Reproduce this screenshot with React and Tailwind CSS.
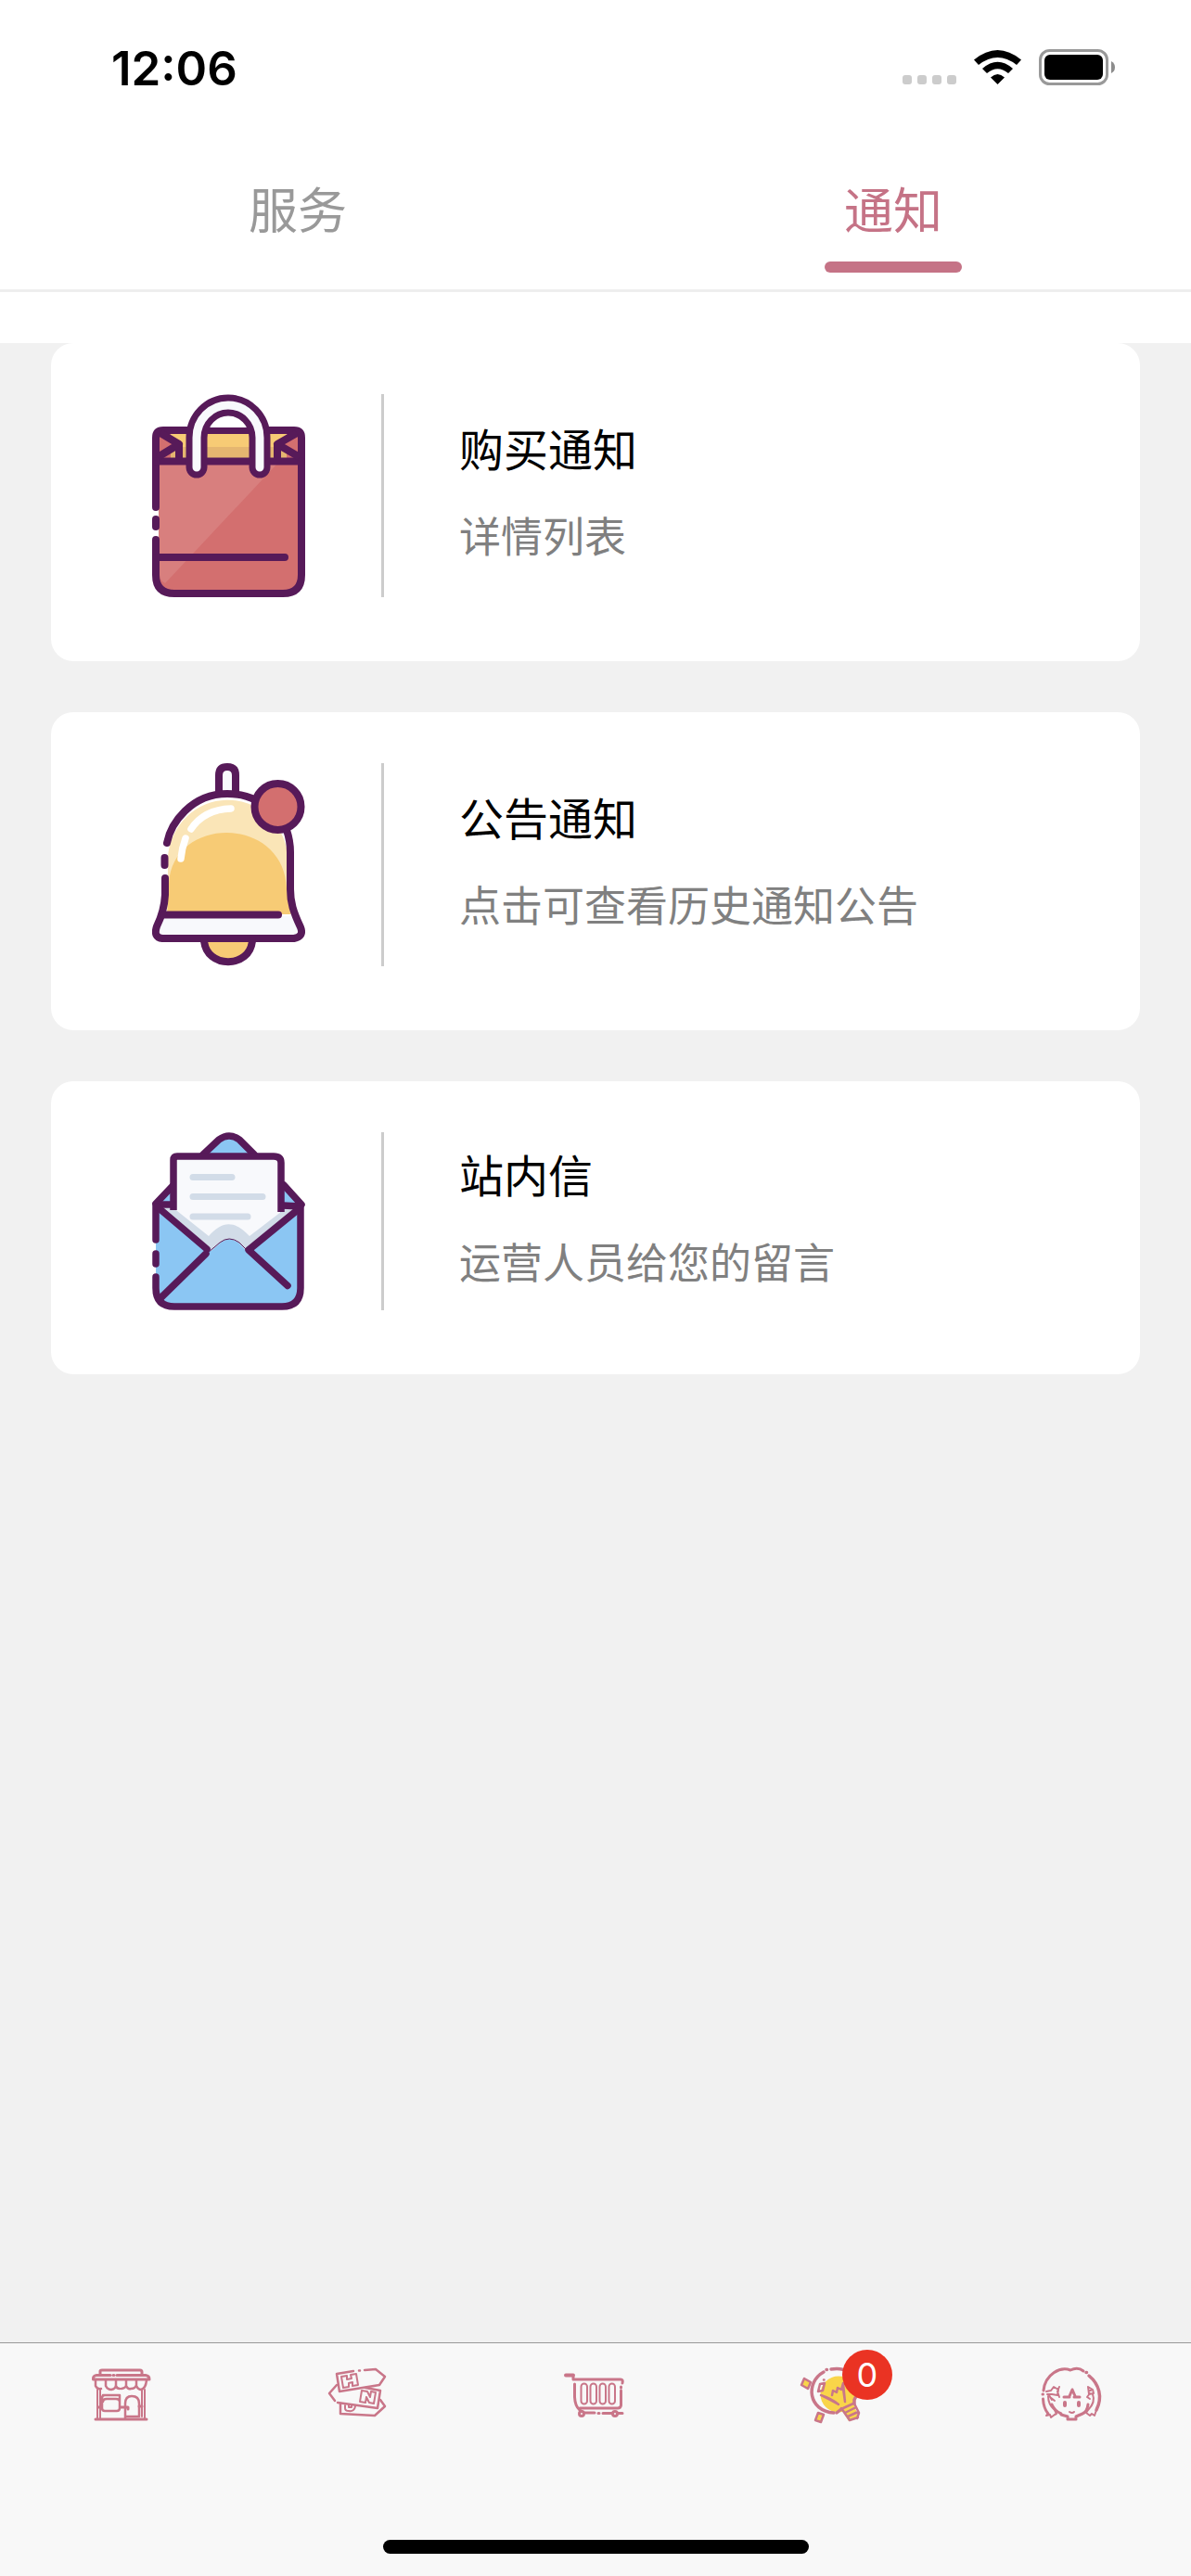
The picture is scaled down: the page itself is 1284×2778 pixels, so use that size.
const PLUM = '#571a59';

function BagIcon() {
  return (
    <svg viewBox="0 0 165 219" className="h-[219px] w-[165px]" aria-hidden="true">
      <rect x="4" y="38" width="157" height="178" rx="16" fill="#d36f6f" />
      <path d="M7 76H134L14 204Q7 200 7 192Z" fill="#d87f7e" />
      <rect x="20" y="42" width="125" height="30" fill="#f7cb75" />
      <path d="M20 57H145V72H20Z" fill="#e5b670" />
      <path d="M7 42L27 54L7 66ZM158 42L139 54L158 66Z" fill="#d36f6f" />
      <path d="M0 124H7V133H0ZM0 146H7V156H0Z" fill="#fff" />
      <g fill="none" stroke={PLUM} strokeWidth="8" strokeLinecap="round" strokeLinejoin="round">
        <path d="M4 122V47Q4 39 12 39H153Q161 39 161 47V195Q161 215 141 215H24Q4 215 4 195V157" />
        <path d="M4 135V143" />
        <path d="M4 72.500H161M4 176H143" />
        <path d="M9 42L29 54L6 68M29 54V70M156 42L135 54L159 68M135 54V70" strokeLinecap="butt" />
      </g>
      <path d="M62 36C67 21 98 21 103 36Z" fill="#fff" />
      <path d="M48 79V47A34 35 0 0 1 116 47V79" fill="none" stroke={PLUM} strokeWidth="23" strokeLinecap="round" />
      <path d="M48 79V47A34 35 0 0 1 116 47V79" fill="none" stroke="#f8f9fc" strokeWidth="9" strokeLinecap="round" />
    </svg>
  );
}

function BellIcon() {
  return (
    <svg viewBox="0 0 165 219" className="h-[219px] w-[165px]" aria-hidden="true">
      <path d="M17 162V100A65 67 0 0 1 146 97V130L150 163Z" fill="#fae5b7" />
      <path d="M16 162L18 130C22 56 142 56 145 135L149 163Z" fill="#f7cb75" />
      <path d="M12 165H150L159 181Q160 187 153 188H11Q5 187 7 181Z" fill="#f8f9fc" />
      <path d="M56 190C58 222 106 222 108 190Z" fill="#f7cb75" />
      <path d="M72 31V13Q72 4 81 4Q90 4 90 13V31Z" fill="#f8f9fc" />
      <g fill="none" stroke={PLUM} strokeWidth="8" strokeLinecap="round" strokeLinejoin="round">
        <path d="M72 31V13Q72 4 81 4Q90 4 90 13V31" />
        <path d="M16 86C20 65 42 33 81 33Q99 33 112 40" />
        <path d="M13.500 102V110" />
        <path d="M14 124V142Q13 160 5 176Q1 188 11 189H153Q164 187 160 177C152 160 149 150 149 136V96Q149 84 145 72" />
        <path d="M13 163.500H136" />
        <path d="M56 191C58 222 106 222 108 191" />
      </g>
      <circle cx="135.500" cy="47" r="25" fill="#d36f6f" stroke={PLUM} strokeWidth="8" />
      <path d="M85 49Q56 50 42 71M36 81Q32 92 31 103" fill="none" stroke="#fff" strokeWidth="7.500" strokeLinecap="round" />
    </svg>
  );
}

function MailIcon() {
  return (
    <svg viewBox="0 0 165 192" className="h-[192px] w-[165px]" aria-hidden="true">
      <path d="M4 78L68 11Q82 -3 97 11L160 78V170Q160 188 143 188H21Q4 188 4 172Z" fill="#8bc6f3" />
      <path d="M24 26H138V90L105 125H60L24 90Z" fill="#f8f9fc" />
      <path d="M9 79L17 77L61 112C76 95 89 95 105 112L148 79L156 81L103 128H62Z" fill="#d2dce8" />
      <path d="M58 133L73 120Q83 111 94 120L106 133Z" fill="#8bc6f3" />
      <path d="M0 121H4V127H0ZM0 146H4V152H0Z" fill="#fff" />
      <g fill="none" stroke={PLUM} strokeWidth="7.500" strokeLinecap="round" strokeLinejoin="round">
        <path d="M55 24L72 8Q83 0 94 8L110 24" />
        <path d="M22 58L4 77M142 57L161 78" />
        <path d="M23 84V30Q23 26 27 26H131Q139 26 139 33V86" strokeLinecap="butt" />
        <path d="M4 116V78H22M141 79L160 80V168Q160 188 140 188H24Q4 188 4 168V156" />
        <path d="M4 131V142" />
        <path d="M5 80L59 126M8 180L58 131M159 82L104 127L146 165.500" />
      </g>
      <path d="M60 130L73 119Q83 111 94 119L103 128" fill="none" stroke={PLUM} strokeWidth="1" />
      <path d="M44 48.500H86M44 69.500H119M44 91H103" fill="none" stroke="#d2dce8" strokeWidth="7" strokeLinecap="round" />
    </svg>
  );
}

function ShopIcon() {
  return (
    <svg viewBox="-3 -1 64 64" className="size-16 overflow-visible" fill="none" stroke="#c97689" strokeWidth="3" strokeLinecap="round" strokeLinejoin="round" aria-hidden="true">
      <path d="M9 9V5Q9 4 11 4H52Q54 4 54 6V9" />
      <path d="M20 9.500H5Q1 10 1.500 14H62Q62 10 58 9.500H27M23 9.500H24" />
      <path d="M4 14V21Q6 25 10 24M15 15V21Q17 25 21 25Q26 24 26 20V15M37 15V21Q39 25 42 24M32 24Q37 23 37 20M48 15V21Q50 25 53 25Q58 24 59 15M26 21Q27 24 30 24M42 24Q47 24 48 20" strokeWidth="2.500" />
      <path d="M6 25V57M9 25V57M54 25V54M57 25V57" strokeWidth="2" />
      <path d="M12 31H30V45Q30 48 27 48H14Q11 48 11 45V34Q11 31 14 31M12 38Q12 35 16 35H26Q30 35 30 38" strokeWidth="2.500" />
      <path d="M36 56V40Q36 32 43 32Q51 32 51 40V54H36" strokeWidth="2.500" />
      <path d="M31 44H39V46M51 43H54M7 44H10" />
      <path d="M4 57H59" />
    </svg>
  );
}

function SignsIcon() {
  return (
    <svg viewBox="0 0 64 64" className="size-16 overflow-visible" fill="none" stroke="#c97689" strokeWidth="2.500" strokeLinecap="round" strokeLinejoin="round" aria-hidden="true">
      <path d="M28 6L10 9L13 28L56 21L62 12L52 4L40 5M34 5.500H35" />
      <path d="M10 21L2 30L8 38M11 40L54 46L57 27L41 24" />
      <path d="M14 41V52L51 54L62 44L57 37" />
      <path d="M15 12L21 11V15L26 14L25 10L31 9L33 21L27 22V18L23 19V23L17 24Z" strokeWidth="2" />
      <path d="M37 27L43 28L46 34L47 28L52 29L50 41L45 40L42 34L41 40L35 39Z" strokeWidth="2" />
      <path d="M19 43V46Q19 49 23 49Q29 50 30 44M23 43V45H26V43" strokeWidth="2" />
    </svg>
  );
}

function CartIcon() {
  return (
    <svg viewBox="2 0 66 64" className="h-16 w-[66px] overflow-visible" fill="none" stroke="#c97689" strokeWidth="3" strokeLinecap="round" strokeLinejoin="round" aria-hidden="true">
      <path d="M3 10.500H11" strokeWidth="4" />
      <path d="M11 12V15H62Q65 15 64 19M62.500 23V24M62.500 27V43Q62 46 59 46H18" />
      <path d="M12.500 20V34Q13 44 18 48L22 51H34M38 51.500H39M43 51.500H64" />
      <g strokeWidth="2">
        <rect x="19.500" y="19.500" width="6.500" height="22" rx="3.250" />
        <rect x="29.500" y="19.500" width="6.500" height="22" rx="3.250" />
        <rect x="39.500" y="19.500" width="6.500" height="22" rx="3.250" />
        <rect x="49.500" y="19.500" width="6.500" height="22" rx="3.250" />
      </g>
      <circle cx="20" cy="52" r="2.500" fill="#f8f8f8" />
      <circle cx="56" cy="52" r="2.500" fill="#f8f8f8" />
    </svg>
  );
}

function BulbIcon() {
  return (
    <svg viewBox="3 -1 66 64" className="h-16 w-[66px] overflow-visible" fill="none" stroke="#c97689" strokeWidth="2.500" strokeLinecap="round" strokeLinejoin="round" aria-hidden="true">
      <circle cx="41" cy="30" r="19.500" fill="#f9d549" stroke="none" />
      <path d="M44 46L56 38L61 50L62 56L52 59Z" fill="#f9d549" stroke="none" />
      <path d="M25 6C5 17 8 48 36 50" strokeWidth="3.500" />
      <path d="M28 3.500H28.500M33 3Q44 1 52 6M58 36V40M39 50L44 46M58 36C62 30 62 22 60 16" strokeWidth="3.500" />
      <path d="M21 19L26 18L24 26L19 27ZM25 14.500H25.500" strokeWidth="2.500" />
      <path d="M22 31Q34 35 41 41Q32 36 22 31ZM34 31L35 26L39 28L40 23L44 25L46 18L48 38L46 24" />
      <path d="M46 45L57 40M48 50L60 44M51 54L62 49M53 58L62 55M44 45L53 58M58 40L63 50L61 56" />
      <path d="M4 13L11 17L8 24L1 20Z" fill="#f9d549" />
      <path d="M19 50L25 52L22 60L16 58Z" fill="#f9d549" />
    </svg>
  );
}

function FaceIcon() {
  return (
    <svg viewBox="1 0 66 64" className="h-16 w-[66px] overflow-visible" fill="none" stroke="#c97689" strokeWidth="3" strokeLinecap="round" strokeLinejoin="round" aria-hidden="true">
      <path d="M3 27C5 9 21 1 32 5Q40 1 46 6" />
      <path d="M49 7.500H49.500M52 11C63 20 67 34 60 48" strokeWidth="3.500" />
      <path d="M2 31H2.500M2.500 36Q3 46 8 52" />
      <path d="M8 52L6 54L10 53L11 56L15 53L17 52L15 48C9 43 8 38 8 33" strokeWidth="2" />
      <path d="M60 48L58 54L55 52L53 54L49 51L51 48C57 42 58 36 56 31" strokeWidth="2" />
      <path d="M6 28L11 27L14 23L19 26L18 32L12 31L7 31M20 23L18 28L20 34M10 34L15 38M9 32L12 37" strokeWidth="2" />
      <path d="M51 23L56 26L57 30L52 31ZM50 34L53 30M50 34L53 36M53 27H54" strokeWidth="2" />
      <path d="M25 34H31M36 34H42M31 33L34 26L37 33" />
      <path d="M12 42Q15 49 22 52M22 53L29 55V58H38V55L45 52Q50 50 51 42" />
      <path d="M26 40V43M41 40V43" strokeWidth="4" />
      <path d="M31 50Q34 52 36 50" strokeWidth="2" />
    </svg>
  );
}

function StatusBar() {
  return (
    <div className="flex h-[146px] items-center justify-between pr-20 pl-[120px]">
      <time className="font-[Inter,sans-serif] text-[51px] leading-none font-semibold">12:06</time>
      <svg viewBox="0 0 232 50" className="h-[50px] w-[232px]" aria-hidden="true">
        <g fill="#ccc">
          <rect x="1" y="33" width="10" height="10" rx="3" />
          <rect x="17" y="33" width="10" height="10" rx="3" />
          <rect x="33" y="33" width="10" height="10" rx="3" />
          <rect x="49" y="33" width="10" height="10" rx="3" />
        </g>
        <g transform="translate(78 6)">
          <path d="M0 10.500Q25.500 -10.500 51 10.500L46 16Q25.500 0 5 16Z" />
          <path d="M9 20Q25.500 5.500 42 20L37 25Q25.500 15.500 14 25Z" />
          <path d="M18 29.500Q25.500 22.500 33 29.500L25.500 37Z" />
        </g>
        <rect x="149.500" y="6.500" width="72" height="36" rx="10" fill="none" stroke="#999" strokeWidth="3" />
        <rect x="154" y="11" width="63" height="27" rx="6" />
        <path d="M226 18Q230 20 230 24.500Q230 29 226 31Z" fill="#8c8c8c" />
      </svg>
    </div>
  );
}

const notices = [
  { title: '购买通知', detail: '详情列表', Icon: BagIcon },
  { title: '公告通知', detail: '点击可查看历史通知公告', Icon: BellIcon },
  { title: '站内信', detail: '运营人员给您的留言', Icon: MailIcon },
];

const navItems = [
  { label: '商店', Icon: ShopIcon },
  { label: '导航', Icon: SignsIcon },
  { label: '购物车', Icon: CartIcon },
  { label: '消息', Icon: BulbIcon, badge: 0 },
  { label: '我的', Icon: FaceIcon },
];

export default function App() {
  return (
    <div className="flex min-h-screen flex-col bg-[#f1f1f1] font-['Noto_Sans_CJK_SC',sans-serif] text-black">
      <header className="bg-white pb-[55px]">
        <StatusBar />
        <div role="tablist" className="grid grid-cols-2 border-b-3 border-[#eee] text-[53px] leading-none">
          <button type="button" role="tab" aria-selected="false" className="flex flex-col items-center pt-[52px] text-[#999]">
            服务
          </button>
          <button type="button" role="tab" aria-selected="true" className="flex flex-col items-center pt-[52px] pb-[18px] text-[#c57386]">
            通知
            <span className="mt-[31px] h-3 w-[148px] rounded-full bg-[#c57386]" />
          </button>
        </div>
      </header>

      <main className="flex flex-1 flex-col gap-[55px] px-[55px]">
        {notices.map(({ title, detail, Icon }) => (
          <a key={title} href="#" className="flex rounded-3xl bg-white pt-[55px] pb-[69px] pl-[109px]">
            <Icon />
            <div className="ml-[82px] w-[3px] bg-[#ccc]" />
            <div className="ml-[81px] flex flex-col justify-center gap-12 pb-3">
              <h2 className="text-5xl leading-none">{title}</h2>
              <p className="text-[45px] leading-none text-[#808080]">{detail}</p>
            </div>
          </a>
        ))}
      </main>

      <footer className="border-t border-[#999] bg-[#f8f8f8]">
        <nav className="grid h-[212px] grid-cols-5">
          {navItems.map(({ label, Icon, badge }) => (
            <button key={label} type="button" aria-label={label} className="flex justify-center pt-6">
              <span className="relative h-16">
                <Icon />
                {badge !== undefined && (
                  <span className="absolute -top-[17px] left-[42px] flex size-[54px] items-center justify-center rounded-full bg-[#ea3323] font-[Inter,sans-serif] text-4xl leading-none text-white">
                    {badge}
                  </span>
                )}
              </span>
            </button>
          ))}
        </nav>
        <div className="mx-auto mb-6 h-[15px] w-[459px] rounded-full bg-black" />
      </footer>
    </div>
  );
}
